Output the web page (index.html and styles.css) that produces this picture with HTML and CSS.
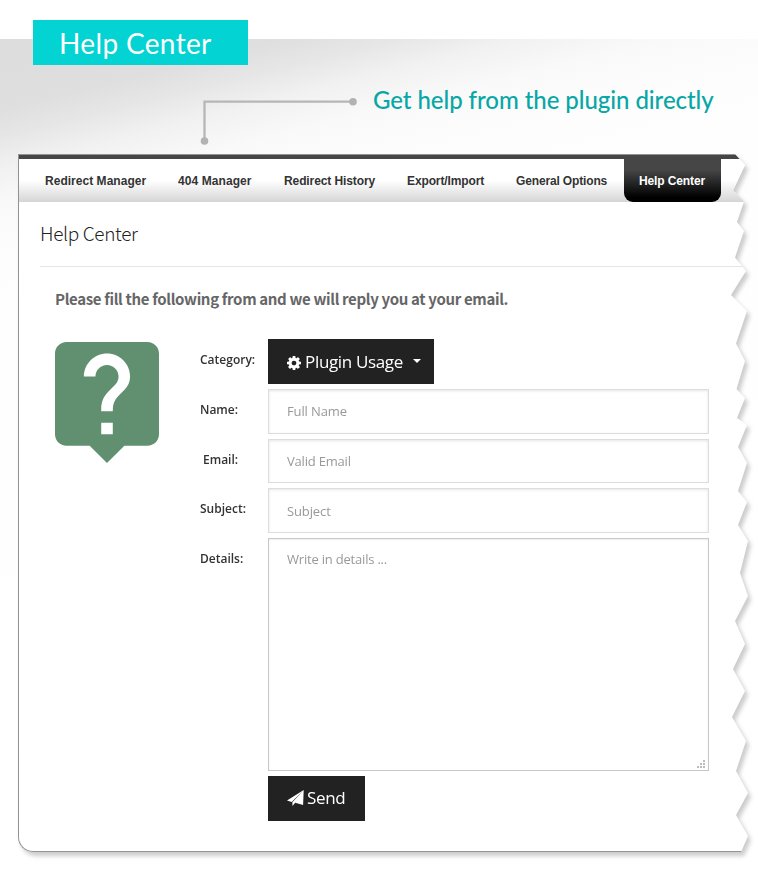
FILE: index.html
```html
<!DOCTYPE html>
<html lang="en">
<head>
<meta charset="utf-8">
<title>Help Center</title>
<link rel="stylesheet" href="styles.css">
</head>
<body>
<div class="page">
  <header class="hero">
    <h1 class="badge"><span>Help Center</span></h1>
    <div class="callout">
      <svg class="pointer" width="158" height="50" viewBox="0 0 158 50">
        <path d="M4.500 44V4.700H153" fill="none" stroke="#b6b6b6" stroke-width="2.300"/>
        <circle cx="4.500" cy="44" r="3.800" fill="#b2b2b2"/>
        <circle cx="153" cy="4.700" r="3.800" fill="#b2b2b2"/>
      </svg>
      <p class="tagline">Get help from the plugin directly</p>
    </div>
  </header>

  <div class="panel-shadow">
    <main class="panel">
      <nav class="tabs">
        <a class="t1">Redirect Manager</a>
        <a class="t2">404 Manager</a>
        <a class="t3">Redirect History</a>
        <a class="t4">Export/Import</a>
        <a class="t5">General Options</a>
        <a class="active">Help Center</a>
      </nav>
      <h2 class="title">Help Center</h2>
      <p class="intro">Please fill the following from and we will reply you at your email.</p>
      <div class="content">
        <svg class="help" width="104" height="121" viewBox="3 2 18 21" preserveAspectRatio="none">
          <path fill="#609070" d="M19 2H5c-1.110 0-2 .9-2 2v14c0 1.100.890 2 2 2h4l3 3 3-3h4c1.100 0 2-.9 2-2V4c0-1.100-.9-2-2-2zm-6 16h-2v-2h2v2zm2.070-7.750l-.9.920C13.450 11.900 13 12.500 13 14h-2v-.5c0-1.100.450-2.100 1.170-2.830l1.240-1.260c.370-.360.590-.860.590-1.410 0-1.100-.9-2-2-2s-2 .9-2 2H8c0-2.210 1.790-4 4-4s4 1.790 4 4c0 .880-.360 1.680-.930 2.250z"/>
        </svg>
        <form class="form">
          <label>Category:</label>
          <button type="button" class="btn category">
            <svg width="14" height="14" viewBox="0 128 1536 1536"><path fill="#fff" d="M1024 896q0-106-75-181t-181-75-181 75-75 181 75 181 181 75 181-75 75-181zm512-109v222q0 12-8 23t-20 13l-185 28q-19 54-39 91 35 50 107 138 10 12 10 25t-9 23q-27 37-99 108t-94 71q-12 0-26-9l-138-108q-44 23-91 38-16 136-29 186-7 28-36 28h-222q-14 0-24.500-8.500t-11.500-21.500l-28-184q-49-16-90-37l-141 107q-10 9-25 9-14 0-25-11-126-114-165-168-7-10-7-23 0-12 8-23 15-21 51-66.500t54-70.500q-27-50-41-99l-183-27q-13-2-21-12.500t-8-23.500v-222q0-12 8-23t19-13l186-28q14-46 39-92-40-57-107-138-10-12-10-24 0-10 9-23 26-36 98.500-107.500t94.500-71.500q13 0 26 10l138 107q44-23 91-38 16-136 29-186 7-28 36-28h222q14 0 24.500 8.500t11.500 21.500l28 184q49 16 90 37l142-107q9-9 24-9 13 0 25 10 129 119 165 170 7 8 7 22 0 12-8 23-15 21-51 66.500t-54 70.500q26 50 41 98l183 28q13 2 21 12.500t8 23.500z"/></svg>
            <span>Plugin Usage</span>
            <i class="caret"></i>
          </button>
          <label>Name:</label>
          <input type="text" placeholder="Full Name">
          <label class="email">Email:</label>
          <input class="valid" type="text" placeholder="Valid Email">
          <label>Subject:</label>
          <input class="subject" type="text" placeholder="Subject">
          <label>Details:</label>
          <div class="area">
            <textarea placeholder="Write in details ..."></textarea>
            <svg class="grip" width="9" height="9" viewBox="0 0 9 9" fill="#bbb"><path d="M6 0h2v2H6zM3 3h2v2H3zM6 3h2v2H6zM0 6h2v2H0zM3 6h2v2H3zM6 6h2v2H6z"/></svg>
          </div>
          <button type="button" class="btn send">
            <svg width="17" height="16" viewBox="0 0 17 16" fill="#fff"><path d="M16.700 0L0 10.600l4.700 1.500zM16.700 0L5.400 12.300V16l2.600-2.900zM16.700 0L8.200 12.700l7.900 2.200z"/></svg>
            <span>Send</span>
          </button>
        </form>
      </div>
    </main>
  </div>
</div>
</body>
</html>
```
FILE: styles.css
```css
* { box-sizing: border-box; }
body { margin: 0; background: #fff; font-family: "Open Sans", sans-serif; }
h1, h2, p { margin: 0; font-weight: 400; }
.page {
  height: 882px;
  overflow: hidden;
  background: linear-gradient(166deg, #dcdcdc 0, #dfdfdf 70px, #e6e6e6 95px, #f1f1f1 125px, #f9f9f9 160px, #fdfdfd 210px, #fefefe 300px, #fff 700px) 0 39px no-repeat;
}
.hero { height: 154px; padding: 20px 0 0 33px; }
.badge {
  width: 215px;
  height: 45px;
  padding-left: 26px;
  background: #03d3d2;
  color: #fff;
  font: 400 28px/46px Lato, sans-serif;
  letter-spacing: 0.35px;
  white-space: nowrap;
}
.callout { display: flex; margin: 32px 0 0 167px; }
.pointer { flex: none; }
.tagline {
  margin: -14px 0 0 15px;
  color: #08a7a7;
  font: 500 24px/34px Lato, sans-serif;
  letter-spacing: -0.06px;
  white-space: nowrap;
}
.panel-shadow { width: 731px; margin-left: 18px; filter: drop-shadow(3px 4px 2px rgba(0, 0, 0, 0.2)); }
.panel {
  width: 731px;
  height: 698px;
  border: 1px solid #939393;
  border-right: 0;
  border-radius: 0 0 0 15px;
  background: #fff;
  clip-path: polygon(0 0, 717px 0, 727px 11px, 715px 36.500px, 726px 47.500px, 719px 68px, 726px 77px, 717px 103.500px, 728px 117px, 713px 141px, 729px 157px, 718px 189.500px, 727px 207px, 718.500px 235px, 727px 244px, 719px 264px, 729px 271px, 720px 293px, 729px 309px, 720px 337px, 729px 348px, 720px 371px, 730px 387px, 722px 419px, 730px 442px, 717px 467px, 727px 490px, 715px 515px, 727px 537px, 714px 563px, 728px 587px, 718px 617px, 730px 639px, 718px 661px, 730px 682px, 723px 698px, 0 698px);
}
.tabs {
  display: flex;
  height: 47px;
  padding-left: 26px;
  border-top: 4px solid #464646;
  background: linear-gradient(#fff 50%, #d5d5d5);
  font: 700 12px/45px "Liberation Sans", sans-serif;
  color: #333;
}
.tabs a { white-space: nowrap; }
.t1 { width: 133px; letter-spacing: 0.03px; }
.t2 { width: 106px; letter-spacing: 0.08px; }
.t3 { width: 123px; letter-spacing: -0.1px; }
.t4 { width: 109px; letter-spacing: -0.12px; }
.t5 { width: 108px; letter-spacing: -0.15px; }
.active {
  width: 97px;
  padding-left: 15px;
  border-radius: 0 0 9px 9px;
  background: linear-gradient(#464646 25%, #000 90%);
  color: #fff;
  letter-spacing: -0.12px;
}
.title {
  height: 65px;
  margin-left: 21px;
  border-bottom: 1px solid #e4e4e4;
  color: #222;
  font: 300 19px/62px "Noto Sans CJK SC", sans-serif;
  letter-spacing: -0.35px;
}
.intro {
  height: 72px;
  padding-left: 36px;
  color: #666;
  font: 700 15px/63px "Noto Sans CJK SC", sans-serif;
  letter-spacing: -0.34px;
}
.content { display: flex; padding-left: 36px; }
.help { flex: none; margin-top: 3px; }
.form {
  display: grid;
  grid-template-columns: 68px 441px;
  grid-template-rows: 45px 45px 44px 45px 233px 45px;
  row-gap: 5px;
  margin-left: 41px;
}
label { color: #333; font-size: 12px; font-weight: 600; line-height: 41px; }
.email { padding-left: 3px; }
input, textarea {
  display: block;
  width: 441px;
  height: 100%;
  margin: 0;
  padding: 0 18px 1px;
  border: 1px solid #ddd;
  border-radius: 0;
  background: #fff;
  box-shadow: inset 0 1px 3px rgba(0, 0, 0, 0.1);
  font: 400 13px/20px "Open Sans", sans-serif;
  letter-spacing: -0.12px;
  resize: none;
}
.valid { letter-spacing: -0.2px; }
.subject { padding-bottom: 0; }
textarea { padding-top: 10px; border-color: #c8c8c8; box-shadow: inset 0 1px 2px rgba(0, 0, 0, 0.07); letter-spacing: -0.2px; }
::placeholder { color: #999; opacity: 1; }
.area { position: relative; }
.grip { position: absolute; right: 3px; bottom: 2px; }
.btn {
  display: flex;
  align-items: center;
  height: 45px;
  padding: 0 0 0 19px;
  border: 0;
  background: #222;
  color: #fff;
  font: 400 17px/45px "Open Sans", sans-serif;
  letter-spacing: -0.35px;
  white-space: nowrap;
}
.category { width: 166px; }
.category svg { margin: 3px 4px 0 0; }
.category span { width: 98px; }
.caret { margin: -1px 0 0 10px; border: 4px solid transparent; border-top-color: #fff; border-bottom: 0; }
.send { grid-column: 2; width: 97px; padding-bottom: 2px; line-height: 43px; }
.send svg { margin: 1px 3px 0 0; }
```
